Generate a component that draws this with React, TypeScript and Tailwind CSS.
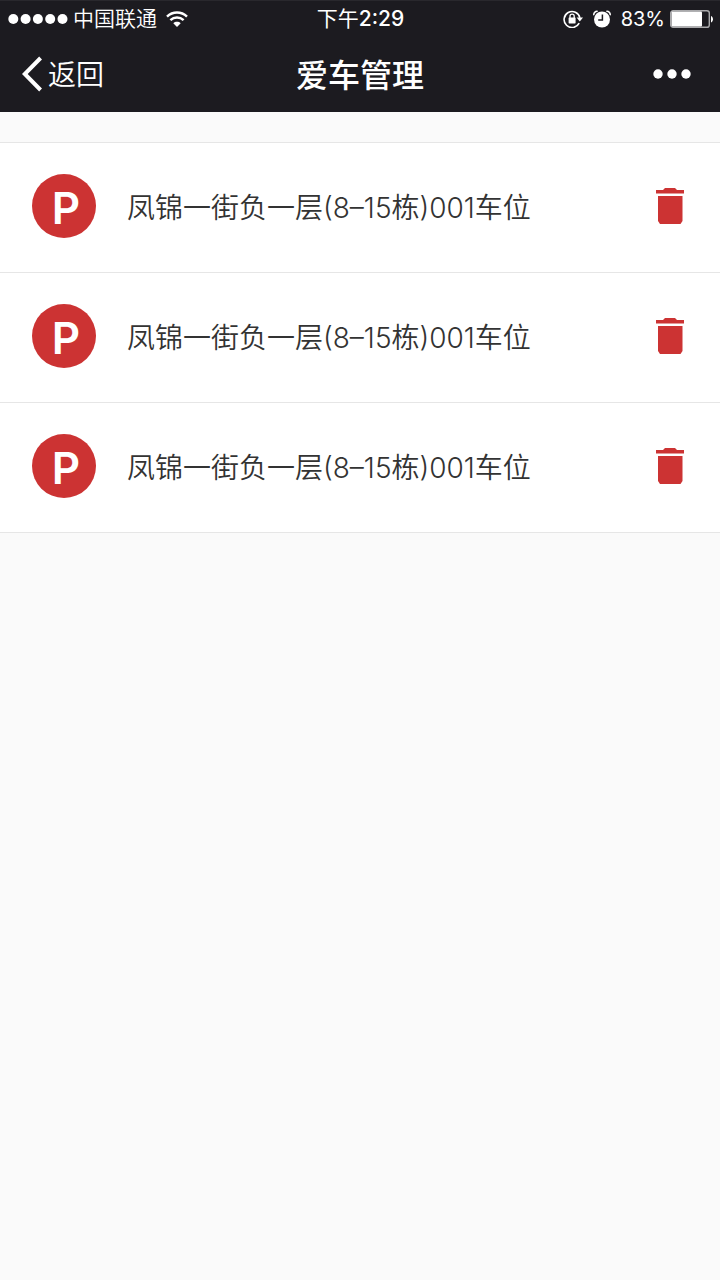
const spots = [
  { id: 1, name: '凤锦一街负一层(8–15栋)001车位' },
  { id: 2, name: '凤锦一街负一层(8–15栋)001车位' },
  { id: 3, name: '凤锦一街负一层(8–15栋)001车位' },
];

function SignalDots() {
  return (
    <svg className="h-[10px] w-[60px]" viewBox="0 0 60 10" fill="currentColor" aria-hidden="true">
      <circle cx="5.3" cy="5" r="5" />
      <circle cx="17.6" cy="5" r="5" />
      <circle cx="29.9" cy="5" r="5" />
      <circle cx="42.2" cy="5" r="5" />
      <circle cx="54.5" cy="5" r="5" />
    </svg>
  );
}

function WifiIcon() {
  return (
    <svg className="h-4 w-[22px]" viewBox="0 0 22 16" fill="none" stroke="currentColor" strokeWidth="2.5" aria-hidden="true">
      <path d="M1 5.6C6.8 .2 15.2.2 21 5.6" />
      <path d="M4.4 9.2C8.2 5.7 13.8 5.7 17.6 9.2" />
      <path d="M11 16L7.3 12.2C9.4 10.3 12.6 10.3 14.7 12.2Z" fill="currentColor" stroke="none" />
    </svg>
  );
}

function RotationLockIcon() {
  return (
    <svg className="h-[18px] w-5" viewBox="0 0 20 18" fill="none" stroke="currentColor" aria-hidden="true">
      <path d="M16.2 13.2A8 8 0 1 1 16.9 7.8" strokeWidth="1.6" />
      <path d="M13.6 7.6H20L16.8 11.6Z" fill="currentColor" stroke="none" />
      <rect x="5.6" y="7.4" width="7" height="6" rx=".6" fill="currentColor" stroke="none" />
      <path d="M7 8V6.2A2.1 2.1 0 0 1 11.2 6.2V8" strokeWidth="1.3" />
    </svg>
  );
}

function AlarmIcon() {
  return (
    <svg className="h-[18px] w-[18px]" viewBox="0 0 18 18" fill="none" aria-hidden="true">
      <circle cx="9" cy="9.5" r="8" fill="currentColor" />
      <path d="M.9 5.2C.3 3.2 2.4.9 4.7 1.4M17.1 5.2C17.7 3.2 15.6.9 13.3 1.4" stroke="currentColor" strokeWidth="1.5" />
      <path d="M9.4 4.6V10H5.2" stroke="#1c1b20" strokeWidth="1.5" />
    </svg>
  );
}

function BatteryIcon() {
  return (
    <svg className="h-[18px] w-[43px]" viewBox="0 0 43 18" aria-hidden="true">
      <rect x=".7" y=".7" width="38.6" height="16.6" rx="2.4" fill="none" stroke="#aaaaac" strokeWidth="1.4" />
      <rect x="1.5" y="1.5" width="30.5" height="15" rx="1" fill="white" />
      <path d="M41 6C43.6 7 43.6 11.4 41 12.4Z" fill="white" />
    </svg>
  );
}

function TrashIcon() {
  return (
    <svg className="h-9 w-7" viewBox="0 0 28 36" fill="currentColor" aria-hidden="true">
      <path d="M0 2H7L9 0H19L21 2H28V5.6H0Z" />
      <path d="M2 8H26.5V33L24.5 36H4L2 33Z" />
    </svg>
  );
}

export default function App() {
  return (
    <div className="min-h-screen bg-[#fafafa] font-['Inter','Noto_Sans_CJK_SC',sans-serif] text-[#333333]">
      <header className="border-t border-[#29282d] bg-[#1c1b20] text-white">
        <div className="grid h-[35px] grid-cols-[1fr_auto_1fr] items-center pr-[7px] pl-2 text-[21px] leading-[30px]">
          <div className="flex items-center gap-[5px]">
            <SignalDots />
            <span className="pb-1 font-['Noto_Sans_CJK_SC',sans-serif] font-[350]">中国联通</span>
            <span className="pl-1">
              <WifiIcon />
            </span>
          </div>
          <time>
            下午<span className="font-medium">2:29</span>
          </time>
          <div className="flex items-center justify-end">
            <RotationLockIcon />
            <span className="px-[10px]">
              <AlarmIcon />
            </span>
            <span className="pr-[5px] text-xl leading-[30px]">83%</span>
            <BatteryIcon />
          </div>
        </div>
        <nav className="grid h-[76px] grid-cols-[1fr_auto_1fr] items-center px-[22px]">
          <a href="#back" className="flex items-center gap-1.5 text-[28px] leading-10 font-[350]">
            <svg className="h-9 w-5" viewBox="0 0 20 36" fill="none" stroke="currentColor" strokeWidth="4" aria-hidden="true">
              <path d="M18.6 2L2.8 18L18.6 34" />
            </svg>
            <span className="pt-0.5">返回</span>
          </a>
          <h1 className="pt-1 text-[32px] leading-[48px] font-medium">爱车管理</h1>
          <button type="button" aria-label="更多" className="flex justify-self-end py-2 pr-[7px] pl-2">
            <svg className="h-[10px] w-[38px]" viewBox="0 0 38 10" fill="currentColor" aria-hidden="true">
              <circle cx="5" cy="5" r="4.7" />
              <circle cx="19" cy="5" r="4.7" />
              <circle cx="33" cy="5" r="4.7" />
            </svg>
          </button>
        </nav>
      </header>
      <main className="pt-[30px]">
        <ul className="border-t border-[#e6e6e6] bg-white">
          {spots.map((spot) => (
            <li key={spot.id} className="flex items-center border-b border-[#e6e6e6] pt-[31px] pr-9 pb-[34px] pl-8">
              <span className="flex size-16 shrink-0 items-center justify-center rounded-full bg-[#cc3333] pt-1 pl-1 text-[44px] leading-none font-semibold text-white">
                P
              </span>
              <span className="grow pt-1 pl-[31px] text-[28px] leading-10 font-[350]">{spot.name}</span>
              <button type="button" aria-label="删除" className="text-[#cc3333]">
                <TrashIcon />
              </button>
            </li>
          ))}
        </ul>
      </main>
    </div>
  );
}
